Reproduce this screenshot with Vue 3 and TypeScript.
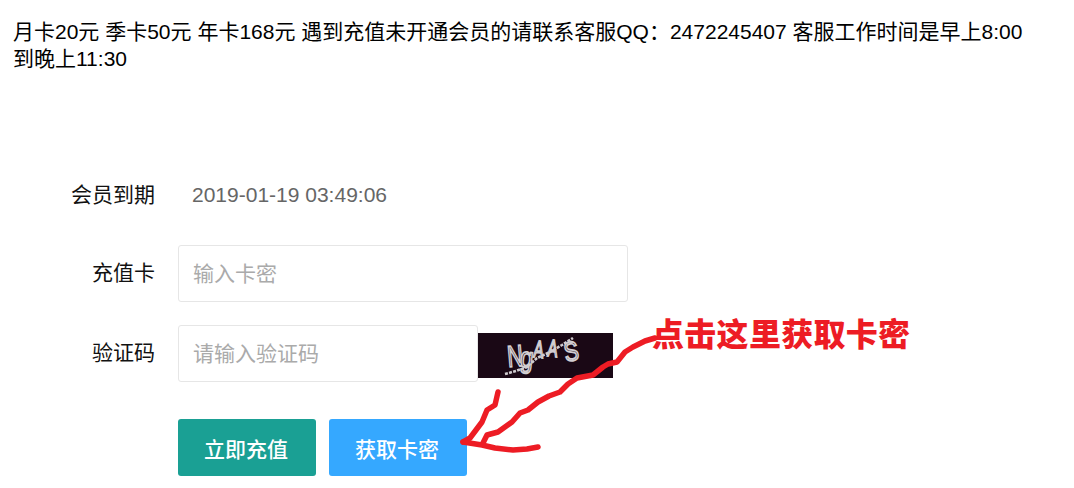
<script setup lang="ts">
interface Row { label: string; placeholder: string }
interface CaptchaLetter { ch: string; x: number; y: number; size: number; rot: number; sx: number }
const cardRow: Row = { label: '充值卡', placeholder: '输入卡密' }
const codeRow: Row = { label: '验证码', placeholder: '请输入验证码' }
const notice = '月卡20元 季卡50元 年卡168元 遇到充值未开通会员的请联系客服QQ：2472245407 客服工作时间是早上8:00到晚上11:30'
const letters: CaptchaLetter[] = [
  { ch: 'N', x: 28, y: 9, size: 30, rot: -5, sx: 0.72 },
  { ch: 'g', x: 44, y: 10, size: 29, rot: 6, sx: 0.8 },
  { ch: 'A', x: 57, y: 4, size: 24, rot: 6, sx: 0.62 },
  { ch: 'A', x: 71, y: 3, size: 24, rot: 6, sx: 0.62 },
  { ch: 'S', x: 84, y: 7, size: 27, rot: -10, sx: 0.8 },
]
function letterStyle(l: CaptchaLetter) {
  return {
    left: `${l.x}px`,
    top: `${l.y}px`,
    fontSize: `${l.size}px`,
    transform: `rotate(${l.rot}deg) scaleX(${l.sx})`,
  }
}
</script>

<template>
  <div class="page">
    <p class="notice">{{ notice }}</p>
    <form class="form" @submit.prevent>
      <div class="row">
        <label class="label">会员到期</label>
        <span class="date">2019-01-19 03:49:06</span>
      </div>
      <div class="row">
        <label class="label">{{ cardRow.label }}</label>
        <input class="input wide" :placeholder="cardRow.placeholder" />
      </div>
      <div class="row code-row">
        <label class="label">{{ codeRow.label }}</label>
        <input class="input short" :placeholder="codeRow.placeholder" />
        <div class="captcha">
          <span v-for="(l, i) in letters" :key="i" class="glyph" :style="letterStyle(l)">{{ l.ch }}</span>
          <svg class="chain" viewBox="0 0 135 45" width="135" height="45">
            <path d="M27 41 L38 38 L49 34 L59 25 L72 19 L84 12 L95 5" fill="none" stroke="#d0cccf" stroke-width="2.6" stroke-dasharray="3 1.2" />
          </svg>
        </div>
      </div>
      <div class="row actions">
        <button class="btn teal" type="button">立即充值</button>
        <button class="btn blue" type="button">获取卡密</button>
      </div>
    </form>

    <svg class="arrow" viewBox="0 0 1074 488" width="1074" height="488">
      <g fill="none" stroke="#ed1c24" stroke-width="5.5" stroke-linecap="round" stroke-linejoin="round">
        <path d="M655 338 L645 341 L633 347 L625 352 L617 362 L608 364 L603 367 L593 375 L577 378 L568 384 L560 392 L549 396 L538 402 L528 410 L520 413 L512 422 L498 432 L487 435 L483 443" />
        <path d="M498 392 L495 405 L487 410 L482 422 L470 438 L463 442" />
        <path d="M463 442 L482 445 L495 448 L513 450 L527 449 L538 447" />
      </g>
    </svg>
    <div class="callout">点击这里获取卡密</div>
  </div>
</template>

<style>
html, body { margin: 0; background: #fff; }
</style>

<style scoped>
.page {
  position: relative;
  width: 1074px;
  height: 488px;
  overflow: hidden;
  background: #fff;
  font-family: "Liberation Sans", "Noto Sans CJK SC", sans-serif;
  color: #000;
}
.notice {
  margin: 0;
  padding: 18px 40px 0 13px;
  font-size: 21px;
  line-height: 27px;
}
.form {
  display: flex;
  flex-direction: column;
  margin-top: 94px;
}
.row {
  display: flex;
  align-items: center;
  height: 57px;
  margin-bottom: 22px;
}
.code-row { margin-top: 1px; }
.label {
  width: 155px;
  margin-right: 23px;
  margin-bottom: 2px;
  text-align: right;
  font-size: 21px;
  line-height: 30px;
  color: #111;
}
.date {
  margin-left: 14px;
  font-size: 21px;
  color: #666;
}
.row:first-child .label { margin-right: 0; margin-bottom: 0; width: 155px; }
.row:first-child .date { margin-left: 37px; }
.input {
  box-sizing: border-box;
  height: 57px;
  padding: 0 14px;
  border: 1px solid #e6e6e6;
  border-radius: 3px;
  font: inherit;
  font-size: 21px;
  outline: none;
  background: #fff;
}
.input::placeholder { color: #aaa; }
.wide { width: 450px; }
.short { width: 300px; }
.captcha {
  position: relative;
  align-self: flex-end;
  margin-bottom: 4px;
  width: 135px;
  height: 45px;
  background: #1a0815;
  overflow: hidden;
}
.glyph {
  position: absolute;
  line-height: 1;
  color: #1a0815;
  -webkit-text-stroke: 1.8px #d2ced1;
  transform-origin: left top;
}
.chain { position: absolute; left: 0; top: 0; }
.actions {
  margin-top: 15px;
  margin-bottom: 0;
  padding-left: 178px;
  gap: 13px;
}
.btn {
  width: 138px;
  height: 57px;
  padding: 0 2px 0 0;
  border: 0;
  border-radius: 3px;
  color: #fff;
  font: inherit;
  font-size: 21px;
  font-weight: 500;
}
.teal { background: #1aa094; }
.blue { background: #35a8ff; }
.arrow {
  position: absolute;
  left: 0;
  top: 0;
  pointer-events: none;
}
.callout {
  position: absolute;
  left: 652px;
  top: 315px;
  font-size: 32px;
  line-height: 40px;
  font-weight: 900;
  letter-spacing: 0.3px;
  color: #ed1c24;
  white-space: nowrap;
}
</style>
